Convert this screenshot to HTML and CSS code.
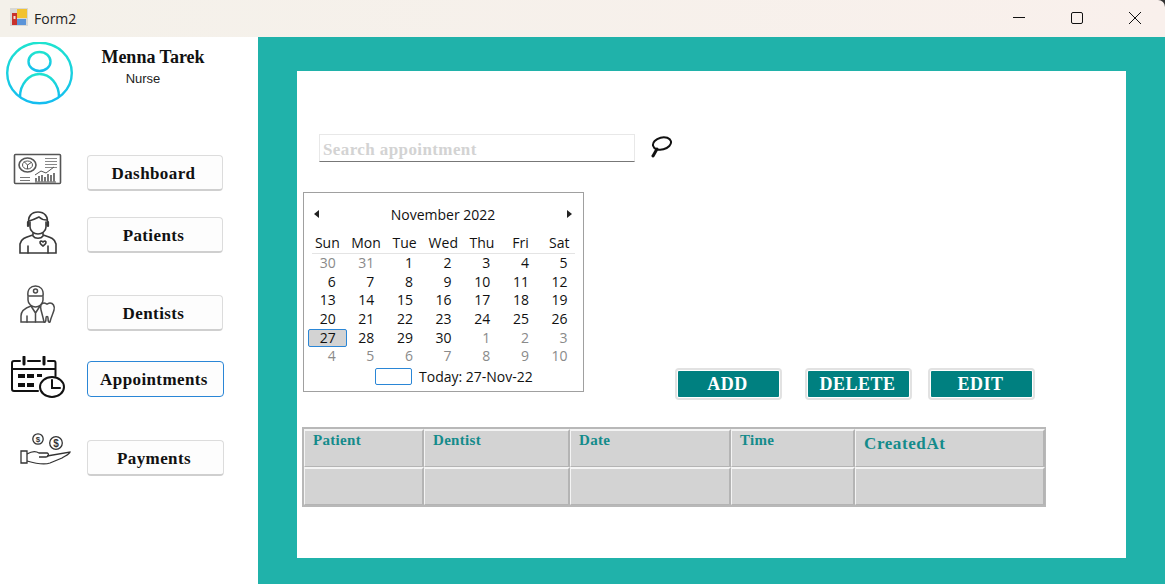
FILE: index.html
```html
<!DOCTYPE html>
<html lang="en">

<head>
    <meta charset="UTF-8">
    <title>Form2</title>
    <link rel="stylesheet" href="styles.css">
</head>

<body>
    <div class="app">
        <div class="titlebar">
            <svg class="form_icon" width="18" height="18" viewBox="0 0 18 18">
                <rect x="0" y="0" width="18" height="18" fill="#d8d8d4" />
                <rect x="2" y="5" width="5" height="12" fill="#c8322c" />
                <rect x="3.5" y="8" width="2" height="3" fill="#f4e0d0" />
                <rect x="7" y="1" width="10" height="9" fill="#f2c230" />
                <rect x="7" y="11" width="9" height="6" fill="#5b94d8" />
            </svg>
            <span class="title">Form2</span>
            <div class="controls">
                <svg width="14" height="14" viewBox="0 0 14 14"><path d="M1 6.5H13" stroke="#111" fill="none" /></svg>
                <svg width="14" height="14" viewBox="0 0 14 14"><rect x="1.5" y="1.5" width="11" height="11" rx="1.5" stroke="#111" fill="none" /></svg>
                <svg width="14" height="14" viewBox="0 0 14 14"><path d="M1 1L13 13M13 1L1 13" stroke="#111" fill="none" /></svg>
            </div>
        </div>

        <div class="main">
            <div class="sidebar">
                <div class="profile">
                    <svg class="avatar" width="68" height="64" viewBox="0 0 68 64">
                        <defs>
                            <linearGradient id="av" x1="0" y1="0" x2="0" y2="1">
                                <stop offset="0" stop-color="#1fe3cf" />
                                <stop offset="1" stop-color="#14bdf0" />
                            </linearGradient>
                        </defs>
                        <g fill="none" stroke="url(#av)" stroke-width="2.4">
                            <ellipse cx="33.5" cy="31" rx="32.3" ry="30.3" />
                            <ellipse cx="33.5" cy="19.5" rx="11" ry="9.5" />
                            <path d="M14 55C14 42 23 32 33.5 32C44 32 53 42 53 55" />
                        </g>
                    </svg>
                    <div class="who">
                        <div class="who_name">Menna Tarek</div>
                        <div class="who_role">Nurse</div>
                    </div>
                </div>

                <div class="nav_row row_dash">
                    <svg class="nav_icon ic_dash" width="50" height="34" viewBox="0 0 50 34">
                        <g fill="none" stroke="#555" stroke-width="1">
                            <rect x="1.5" y="2.5" width="46" height="29" rx="1" stroke-width="1.6" />
                            <ellipse cx="14.5" cy="13" rx="8.5" ry="7" stroke-width="1.6" />
                            <ellipse cx="14.5" cy="13" rx="5" ry="4" />
                            <path d="M14.5 13L19 10M14.5 13L11 9.5M14.5 13V17" />
                            <path d="M32 6.5H44M32 9.5H44M32 12.5H44M32 15.5H44" stroke="#888" />
                            <path d="M7 25.5H17M7 28.5H17" stroke="#777" />
                            <path d="M22 23L28 19L33 21L41 15" />
                            <path d="M23 29.5V26M26 29.5V24M29 29.5V23M32 29.5V25M35 29.5V22M38 29.5V23M41 29.5V21" stroke-width="1.6" />
                            <path d="M22 30H43" />
                        </g>
                    </svg>
                    <button class="nav_btn btn_short">Dashboard</button>
                </div>

                <div class="nav_row row_patient">
                    <svg class="nav_icon ic_patient" width="42" height="44" viewBox="0 0 42 44">
                        <g fill="none" stroke="#3a3a3a" stroke-width="1.6" stroke-linecap="round">
                            <path d="M11 14C9 5 14 1 20 1C26 1 31 5 29 14" />
                            <path d="M11 10C15 9 19 7 21 6C23 8 26 9 29 9" />
                            <path d="M12 11V16C12 20 16 23 20 23C24 23 28 20 28 16V11" />
                            <path d="M10 11V15M30 11V15" stroke-width="2.2" />
                            <path d="M15 22V24C9 26 3 27 2 33V42H38V33C37 27 31 26 25 24V22" />
                            <path d="M15 25C17 28 23 28 25 25" />
                            <path d="M10 42V35M30 42V35" />
                            <path d="M25 35C22 33 21 31 23 30C24 30 25 31 25 31C25 31 26 30 27 30C29 31 28 33 25 35Z" />
                        </g>
                    </svg>
                    <button class="nav_btn btn_short">Patients</button>
                </div>

                <div class="nav_row row_dentist">
                    <svg class="nav_icon ic_dentist" width="36" height="40" viewBox="0 0 36 40">
                        <g fill="none" stroke="#4a4a4a" stroke-width="1.5" stroke-linecap="round">
                            <path d="M8 11C7 4 11 1 15.5 1C20 1 24 4 23 11Z" />
                            <circle cx="15.5" cy="6" r="2" />
                            <path d="M8 12V15C8 19 12 22 15.5 22C19 22 23 19 23 15V12" />
                            <path d="M11 21C5 23 1 26 1 31V37H24" />
                            <path d="M11 21L15.5 28L20 21M7 37V31M15.5 28V37" />
                            <path d="M24 18C21 18 20 21 21 25C22 29 23 32 24 37C25 38 26 37 26 33C26 31 28 31 28 33C28 37 29 38 30 37C31 32 33 29 34 25C35 21 33 18 30 18C28 18 28 19 27 19C26 19 26 18 24 18Z" fill="#fff" />
                        </g>
                    </svg>
                    <button class="nav_btn btn_short">Dentists</button>
                </div>

                <div class="nav_row row_appt">
                    <svg class="nav_icon ic_appt" width="55" height="42" viewBox="0 0 55 42">
                        <g fill="none" stroke="#111" stroke-width="2" stroke-linecap="round">
                            <path d="M9 5H3C2 5 1 6 1 7V33C1 34 2 35 3 35H27" />
                            <path d="M17 5H29M37 5H43C44 5 44.5 6 44.5 7V20" />
                            <path d="M13 1V8M33 1V8" stroke-width="3" />
                            <path d="M1 13H44" />
                            <ellipse cx="41" cy="31" rx="12" ry="10" fill="#fff" />
                            <path d="M41 24V32H49" />
                        </g>
                        <g fill="#111">
                            <rect x="7" y="18" width="7" height="4" />
                            <rect x="16" y="18" width="7" height="4" />
                            <rect x="26" y="18" width="5" height="3" />
                            <rect x="7" y="27" width="7" height="4" />
                            <rect x="16" y="27" width="7" height="4" />
                        </g>
                    </svg>
                    <button class="nav_btn btn_long is_active">Appointments</button>
                </div>

                <div class="nav_row row_pay">
                    <svg class="nav_icon ic_pay" width="52" height="34" viewBox="0 0 52 34">
                        <g fill="none" stroke="#333" stroke-width="1.3">
                            <circle cx="18" cy="7" r="5.2" />
                            <circle cx="36" cy="11" r="6.3" />
                            <path d="M1 19H7V31H1Z" />
                            <path d="M7 22C12 19 16 19 19 21H27C29 21 29 25 26 25H19" />
                            <path d="M27 24L50 20C50 22 45 24 42 26L30 31C24 33 14 31 7 29" />
                        </g>
                        <text x="18" y="10" class="coin coin_small">$</text>
                        <text x="36" y="15" class="coin">$</text>
                    </svg>
                    <button class="nav_btn btn_long">Payments</button>
                </div>
            </div>

            <div class="content">
                <div class="panel">
                    <div class="search_row">
                        <input class="search" type="text" value="Search appointment">
                        <svg class="search_icon" width="24" height="23" viewBox="0 0 24 23">
                            <ellipse cx="12" cy="7.5" rx="9.2" ry="6" transform="rotate(-14 12 7.5)" fill="none" stroke="#111" stroke-width="2" />
                            <path d="M7 13L3 20" stroke="#111" stroke-width="3" stroke-linecap="round" />
                        </svg>
                    </div>

                    <div class="mid_row">
                        <div class="calendar">
                            <div class="cal_head">
                                <span class="arrow arrow_left"></span>
                                <span>November 2022</span>
                                <span class="arrow arrow_right"></span>
                            </div>
                            <div class="cal_week">
                                <span>Sun</span><span>Mon</span><span>Tue</span><span>Wed</span><span>Thu</span><span>Fri</span><span>Sat</span>
                            </div>
                            <div class="cal_rule"></div>
                            <div class="cal_days">
                                <span class="off">30</span><span class="off">31</span><span>1</span><span>2</span><span>3</span><span>4</span><span>5</span>
                                <span>6</span><span>7</span><span>8</span><span>9</span><span>10</span><span>11</span><span>12</span>
                                <span>13</span><span>14</span><span>15</span><span>16</span><span>17</span><span>18</span><span>19</span>
                                <span>20</span><span>21</span><span>22</span><span>23</span><span>24</span><span>25</span><span>26</span>
                                <span class="today">27</span><span>28</span><span>29</span><span>30</span><span class="off">1</span><span class="off">2</span><span class="off">3</span>
                                <span class="off">4</span><span class="off">5</span><span class="off">6</span><span class="off">7</span><span class="off">8</span><span class="off">9</span><span class="off">10</span>
                            </div>
                            <div class="cal_foot">
                                <span class="today_box"></span>
                                <span>Today: 27-Nov-22</span>
                            </div>
                        </div>

                        <div class="actions">
                            <button class="act_btn">ADD</button>
                            <button class="act_btn">DELETE</button>
                            <button class="act_btn">EDIT</button>
                        </div>
                    </div>

                    <table class="grid">
                        <colgroup>
                            <col class="col_a">
                            <col class="col_b">
                            <col class="col_c">
                            <col class="col_d">
                            <col class="col_e">
                        </colgroup>
                        <tr>
                            <th>Patient</th>
                            <th>Dentist</th>
                            <th>Date</th>
                            <th>Time</th>
                            <th class="big_head">CreatedAt</th>
                        </tr>
                        <tr>
                            <td></td>
                            <td></td>
                            <td></td>
                            <td></td>
                            <td></td>
                        </tr>
                    </table>
                </div>
            </div>
        </div>
    </div>
</body>

</html>
```
FILE: styles.css
```css
* {
    margin: 0;
    padding: 0;
    box-sizing: border-box;
}

html,
body {
    height: 100%;
    background: #fff;
    overflow: hidden;
}

.app {
    width: 1165px;
    height: 584px;
    display: flex;
    flex-direction: column;
    background: #333;
}

/* title bar */
.titlebar {
    height: 37px;
    display: flex;
    align-items: center;
    padding: 0 0 1px 10px;
    background: linear-gradient(90deg, #f4f1ea, #f9f0ec);
    border-top-right-radius: 7px;
}

.form_icon {
    margin: -2px 6px 0 0;
}

.title {
    font: 14px "Open Sans", sans-serif;
    color: #222;
}

.controls {
    margin-left: auto;
    display: flex;
    gap: 44px;
    padding-right: 23px;
}

.main {
    flex: 1;
    display: flex;
    background: #fff;
}

/* left side */
.sidebar {
    width: 258px;
    background: #fff;
}

.profile {
    height: 118px;
    display: flex;
    padding: 5px 0 0 6px;
}

.who {
    width: 158px;
    padding: 5px 0 0 0;
    text-align: center;
}

.who_name {
    font: bold 18px "Liberation Serif", serif;
    color: #111;
}

.who_role {
    font: 13px "Liberation Sans", sans-serif;
    color: #222;
    margin-top: 3px;
    margin-right: 20px;
}

.nav_row {
    display: flex;
    height: 36px;
    padding-left: 87px;
    position: relative;
}

.row_patient {
    margin-top: 26px;
}

.row_dentist {
    margin-top: 42px;
}

.row_appt {
    margin-top: 30px;
}

.row_pay {
    margin-top: 43px;
}

/* icons sit over the row, beside the button */
.nav_icon {
    position: absolute;
}

.ic_dash {
    left: 13px;
    top: -3px;
}

.ic_patient {
    left: 18px;
    top: -6px;
}

.ic_dentist {
    left: 20px;
    top: -10px;
}

.ic_appt {
    left: 11px;
    top: -5px;
}

.ic_pay {
    left: 20px;
    top: -8px;
}

.coin {
    font: bold 10px "Liberation Sans", sans-serif;
    fill: #333;
    text-anchor: middle;
}

.coin_small {
    font-size: 8px;
}

.nav_btn {
    height: 36px;
    padding: 2px 3px 0 0;
    background: #fdfdfd;
    border: 1px solid #dcdcdc;
    border-bottom: 2px solid #cfcfcf;
    border-radius: 4px;
    font: bold 17px "Liberation Serif", serif;
    letter-spacing: 0.4px;
    color: #111;
}

.btn_short {
    width: 136px;
}

.btn_long {
    width: 137px;
}

.is_active {
    border: 1px solid #2a86d6;
}

/* teal area */
.content {
    flex: 1;
    background: #20b2aa;
    padding: 34px 39px 26px 39px;
}

.panel {
    height: 487px;
    background: #fff;
    padding: 63px 0 0 5px;
}

.search_row {
    display: flex;
    align-items: flex-start;
    margin-left: 17px;
}

.search {
    width: 316px;
    height: 28px;
    border: 1px solid #e8e8e8;
    border-bottom: 1px solid #777;
    padding: 3px 0 0 3px;
    font: bold 17px "Liberation Serif", serif;
    letter-spacing: 0.4px;
    color: #d3d3d3;
    outline: none;
}

.search_icon {
    margin: 2px 0 0 15px;
}

.mid_row {
    display: flex;
    align-items: flex-end;
    margin: 30px 0 0 1px;
}

/* month calendar */
.calendar {
    width: 281px;
    height: 200px;
    border: 1px solid #a0a0a0;
    padding: 0 4px;
    font: 14px "Open Sans", sans-serif;
    color: #111;
}

.cal_head {
    height: 40px;
    display: flex;
    align-items: center;
    justify-content: space-between;
    padding: 2px 7px 0 6px;
}

.arrow {
    width: 0;
    height: 0;
    border-top: 4.5px solid transparent;
    border-bottom: 4.5px solid transparent;
}

.arrow_left {
    border-right: 5px solid #222;
}

.arrow_right {
    border-left: 5px solid #222;
}

.cal_week {
    display: grid;
    grid-template-columns: repeat(7, 38.67px);
    height: 20px;
    text-align: center;
    line-height: 19px;
}

.cal_rule {
    height: 1px;
    margin: 0 4px;
    background: #e4e4e4;
}

.cal_days {
    display: grid;
    grid-template-columns: repeat(7, 38.67px);
    grid-auto-rows: 18.67px;
    line-height: 18px;
    text-align: right;
}

.cal_days span {
    padding-right: 11px;
}

.cal_days .off {
    color: #8a8a8a;
}

.cal_days .today {
    background: #d3d3d3;
    border: 1px solid #2a86d6;
    border-radius: 2px;
    line-height: 16px;
    padding-right: 10px;
}

.cal_foot {
    display: flex;
    align-items: center;
    gap: 7px;
    height: 22px;
    padding-left: 67px;
}

.today_box {
    width: 37px;
    height: 17px;
    border: 1px solid #2a86d6;
    border-radius: 2px;
}

/* action buttons */
.actions {
    display: flex;
    margin: 0 0 -8px 91px;
}

.act_btn {
    width: 107px;
    height: 32px;
    margin-right: 23px;
    padding-right: 2px;
    background: #008080;
    border: 3px solid #fff;
    outline: 2px solid #e2e2e2;
    outline-offset: -2px;
    border-radius: 4px;
    font: bold 18px "Liberation Serif", serif;
    letter-spacing: 0.5px;
    color: #fff;
}

.act_btn:last-child {
    margin-left: -7px;
}

/* data grid */
.grid {
    width: 744px;
    margin-top: 35px;
    table-layout: fixed;
    border-collapse: separate;
    border-spacing: 0;
    border: 2px solid #b8b8b8;
    border-right-width: 1px;
}

.col_a {
    width: 120px;
}

.col_b {
    width: 146px;
}

.col_c {
    width: 161px;
}

.col_d {
    width: 124px;
}

.grid th,
.grid td {
    height: 38px;
    background: #d3d3d3;
    border-top: 2px solid #f4f4f4;
    border-left: 1px solid #f4f4f4;
    border-right: 2px solid #b4b4b4;
    border-bottom: 1px solid #b4b4b4;
}

.grid th {
    vertical-align: top;
    text-align: left;
    padding: 1px 0 0 8px;
    font: bold 15px "Liberation Serif", serif;
    letter-spacing: 0.3px;
    color: #148b8b;
}

.grid .big_head {
    font-size: 17px;
    letter-spacing: 0.6px;
    padding-top: 3px;
}
```
